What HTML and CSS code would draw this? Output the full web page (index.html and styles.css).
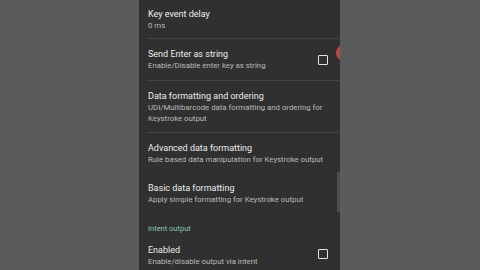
FILE: index.html
```html
<!DOCTYPE html>
<html>
<head>
<meta charset="utf-8">
<link rel="stylesheet" href="styles.css">
</head>
<body>
<div class="phone">
  <div class="row row-first">
    <div class="text">
      <div class="title">Key event delay</div>
      <div class="summary">0 ms</div>
    </div>
  </div>
  <div class="divider"></div>
  <div class="row row-std">
    <div class="text">
      <div class="title">Send Enter as string</div>
      <div class="summary">Enable/Disable enter key as string</div>
    </div>
    <div class="checkbox"></div>
  </div>
  <div class="divider"></div>
  <div class="row row-tall">
    <div class="text">
      <div class="title">Data formatting and ordering</div>
      <div class="summary">UDI/Multibarcode data formatting and ordering for Keystroke output</div>
    </div>
  </div>
  <div class="divider"></div>
  <div class="row row-adv">
    <div class="text">
      <div class="title">Advanced data formatting</div>
      <div class="summary">Rule based data manipulation for Keystroke output</div>
    </div>
  </div>
  <div class="row row-basic">
    <div class="text">
      <div class="title">Basic data formatting</div>
      <div class="summary">Apply simple formatting for Keystroke output</div>
    </div>
  </div>
  <div class="category">Intent output</div>
  <div class="row row-last">
    <div class="text">
      <div class="title">Enabled</div>
      <div class="summary">Enable/disable output via intent</div>
    </div>
    <div class="checkbox"></div>
  </div>
  <div class="scrollbar"></div>
  <div class="fab-edge"></div>
</div>
</body>
</html>
```
FILE: styles.css
```css
html, body {
  margin: 0;
  padding: 0;
  background: #5b5b5b;
  width: 480px;
  height: 270px;
  overflow: hidden;
}
body {
  font-family: Roboto, "Liberation Sans", sans-serif;
}
.phone {
  position: relative;
  margin-left: 139px;
  width: 201px;
  height: 270px;
  background: #303030;
  overflow: hidden;
}
.row {
  display: flex;
  align-items: center;
  padding-left: 9px;
  padding-right: 12px;
  box-sizing: border-box;
}
.row-first { height: 38px; align-items: flex-start; }
.row-first .text { padding-top: 8px; }
.row-std { height: 41px; }
.row-tall { height: 51px; padding-right: 8px; }
.row-adv { height: 40px; }
.row-basic { height: 40px; }
.row-last { height: 40px; align-items: flex-start; }
.row-last .text { padding-top: 6px; }
.row-last .checkbox { margin-top: 11px; }
.text {
  flex: 1;
  min-width: 0;
}
.title {
  color: #ececec;
  font-size: 9px;
  line-height: 12px;
}
.summary {
  color: #bababa;
  font-size: 7.8px;
  line-height: 11px;
}
.checkbox {
  width: 8px;
  height: 8px;
  border: 1.5px solid #e4e4e4;
  border-radius: 1px;
  flex: none;
}
.divider {
  height: 1px;
  margin-left: 8px;
  background: #434343;
}
.category {
  height: 25px;
  box-sizing: border-box;
  padding-left: 9px;
  padding-top: 10px;
  color: #86c6b2;
  font-size: 7.5px;
  line-height: 12px;
}
.scrollbar {
  position: absolute;
  right: 0;
  top: 172px;
  width: 3px;
  height: 40px;
  background: #4c4c4c;
}
.fab-edge {
  position: absolute;
  right: -12px;
  top: 45px;
  width: 16px;
  height: 16px;
  border-radius: 50%;
  background: #b24a48;
}
```
